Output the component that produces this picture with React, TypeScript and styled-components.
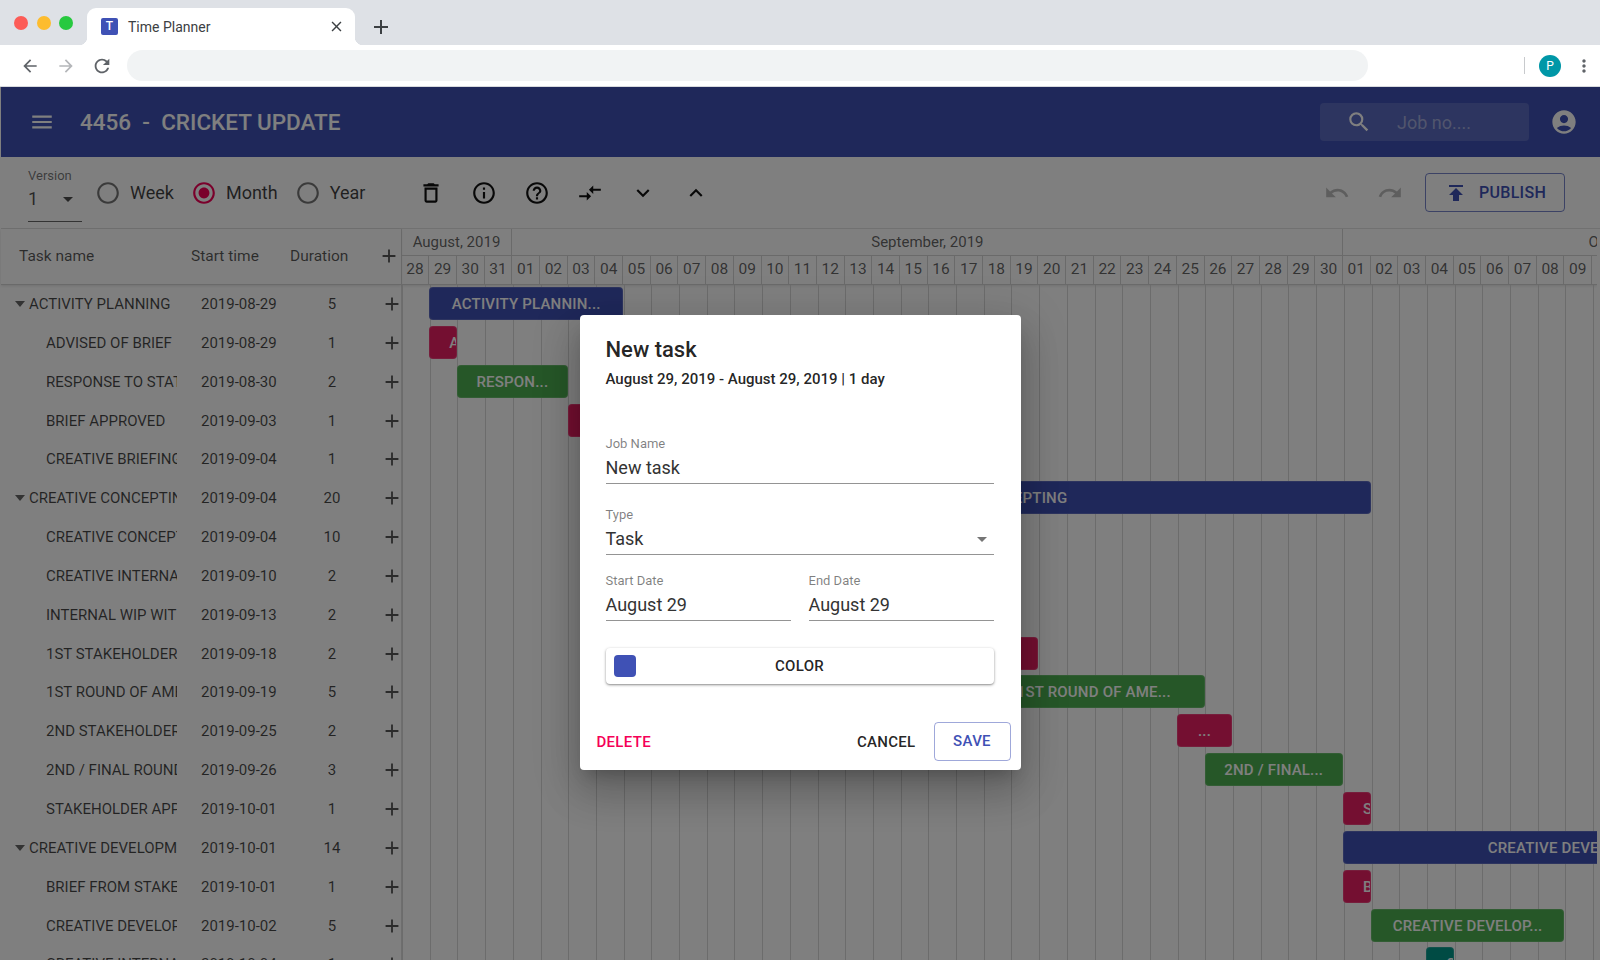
import React from 'react';
import styled, { createGlobalStyle } from 'styled-components';
import {
  MdAccountCircle,
  MdAdd,
  MdArrowBack,
  MdArrowDropDown,
  MdArrowForward,
  MdClose,
  MdCompareArrows,
  MdDeleteOutline,
  MdHelpOutline,
  MdInfoOutline,
  MdKeyboardArrowDown,
  MdKeyboardArrowUp,
  MdMenu,
  MdMoreVert,
  MdPublish,
  MdRadioButtonChecked,
  MdRadioButtonUnchecked,
  MdRedo,
  MdRefresh,
  MdSearch,
  MdUndo,
} from 'react-icons/md';

const DAY = 27.7;
const ROW = 38.85;

const GlobalStyle = createGlobalStyle`
  html, body {
    margin: 0;
    padding: 0;
    background: #fff;
  }
  * {
    box-sizing: border-box;
  }
  body {
    font-family: Roboto, "Liberation Sans", sans-serif;
  }
`;

const Page = styled.div`
  width: 1600px;
  height: 960px;
  display: flex;
  flex-direction: column;
  overflow: hidden;
`;

const TabStrip = styled.div`
  height: 45px;
  flex: none;
  background: #dee1e6;
  display: flex;
  align-items: flex-end;
`;

const Lights = styled.div`
  width: 87px;
  height: 45px;
  padding: 16px 0 0 14px;
  display: flex;
  gap: 8.5px;
`;

const Light = styled.span<{ $color: string }>`
  width: 14px;
  height: 14px;
  border-radius: 50%;
  background: ${(p) => p.$color};
`;

const Tab = styled.div`
  position: relative;
  width: 268px;
  height: 37px;
  background: #fff;
  border-radius: 9px 9px 0 0;
  display: flex;
  align-items: center;
  padding: 0 10px 0 14px;
  color: #3c4043;
  font-size: 14px;

  &::before,
  &::after {
    content: '';
    position: absolute;
    bottom: 0;
    width: 8px;
    height: 8px;
  }
  &::before {
    left: -8px;
    background: radial-gradient(circle at 0 0, transparent 8px, #fff 8.5px);
  }
  &::after {
    right: -8px;
    background: radial-gradient(circle at 100% 0, transparent 8px, #fff 8.5px);
  }
`;

const Favicon = styled.span`
  width: 17px;
  height: 17px;
  margin-right: 10px;
  background: #3f51b5;
  border-radius: 2px;
  color: #fff;
  font-size: 12px;
  font-weight: 500;
  line-height: 17px;
  text-align: center;
`;

const TabTitle = styled.span`
  flex: 1;
`;

const NewTab = styled.span`
  margin-left: 14px;
  height: 37px;
  display: flex;
  align-items: center;
  color: #3c4043;
`;

const AddressBar = styled.div`
  height: 41px;
  flex: none;
  background: #fff;
  display: flex;
  align-items: center;
  padding: 0 6px 0 12px;
  color: #5f6368;
`;

const NavIcon = styled.span<{ $faded?: boolean }>`
  width: 36px;
  display: flex;
  justify-content: center;
  margin-left: ${(p) => (p.$faded ? '0' : '0')};
  color: ${(p) => (p.$faded ? '#b4b6b9' : '#5f6368')};
`;

const UrlField = styled.div`
  width: 1245px;
  height: 31px;
  margin-left: 7px;
  background: #f1f3f4;
  border-radius: 16px;
`;

const BarDivider = styled.span`
  width: 1px;
  height: 17px;
  margin-left: 156px;
  background: #c8cacd;
`;

const Avatar = styled.span`
  width: 22px;
  height: 22px;
  margin-left: 14px;
  border-radius: 50%;
  background: #0097a7;
  color: #fff;
  font-size: 12px;
  line-height: 22px;
  text-align: center;
`;

const MenuDots = styled.span`
  margin-left: 13px;
  display: flex;
  color: #5f6368;
`;

const Stage = styled.div`
  position: relative;
  flex: 1;
  min-height: 0;
  padding-left: 1px;
  background: #fff;
  border-top: 1px solid #d8dade;
  overflow: hidden;
`;

const AppBar = styled.header`
  height: 70px;
  background: #3f51b5;
  display: flex;
  align-items: center;
  padding: 0 22px 0 28px;
  color: #fff;
`;

const JobTitle = styled.h1`
  flex: 1;
  margin: 0 0 0 25px;
  font-size: 22.5px;
  font-weight: 500;
  white-space: pre;
`;

const SearchBox = styled.div`
  width: 209px;
  height: 38px;
  background: rgba(255, 255, 255, 0.15);
  border-radius: 4px;
  display: flex;
  align-items: center;
  padding-left: 26px;
  margin-right: 21px;
`;

const SearchHint = styled.span`
  margin-left: 25px;
  font-size: 18px;
  color: rgba(255, 255, 255, 0.45);
`;

const ToolBar = styled.div`
  height: 71px;
  display: flex;
  align-items: center;
  padding: 0 35px 0 27px;
  color: rgba(0, 0, 0, 0.87);
`;

const VersionField = styled.div`
  width: 54px;
  height: 54px;
  margin-top: 4px;
  border-bottom: 1px solid rgba(0, 0, 0, 0.6);
`;

const SmallLabel = styled.div`
  font-size: 13px;
  line-height: 16px;
  color: rgba(0, 0, 0, 0.54);
`;

const VersionValue = styled.div`
  display: flex;
  align-items: center;
  justify-content: space-between;
  height: 30px;
  font-size: 18px;
  padding-right: 2px;
  color: rgba(0, 0, 0, 0.7);
`;

const RangeGroup = styled.div`
  display: flex;
  align-items: center;
  margin-left: 13px;
  margin-right: 22px;
`;

const RangeOption = styled.label<{ $on?: boolean }>`
  display: flex;
  align-items: center;
  gap: 9px;
  margin-right: 17px;
  font-size: 18px;
  color: rgba(0, 0, 0, 0.75);

  svg {
    color: ${(p) => (p.$on ? '#f50057' : 'rgba(0,0,0,.54)')};
  }
`;

const ToolButton = styled.span`
  width: 53px;
  display: flex;
  justify-content: center;
  color: #111;
`;

const Spacer = styled.div`
  flex: 1;
`;

const HistoryButton = styled.span`
  width: 53px;
  display: flex;
  justify-content: center;
  color: rgba(0, 0, 0, 0.26);
`;

const PublishButton = styled.button`
  width: 140px;
  height: 39px;
  margin-left: 9px;
  border: 1px solid rgba(63, 81, 181, 0.7);
  border-radius: 4px;
  background: transparent;
  color: #3f51b5;
  font: 500 16px Roboto, sans-serif;
  letter-spacing: 0.3px;
  display: flex;
  align-items: center;
  justify-content: center;
  gap: 11px;
`;

const Gantt = styled.div`
  display: grid;
  grid-template-columns: 400.6px 1fr;
  border-top: 1px solid #e2e2e2;
`;

const TaskPanel = styled.div`
  border-right: 1px solid #dcdcdc;
`;

const PanelHead = styled.div`
  height: 55.6px;
  display: grid;
  grid-template-columns: 172px 99px 88px 1fr;
  align-items: center;
  padding-left: 18px;
  font-size: 15.5px;
  color: rgba(0, 0, 0, 0.66);
  border-bottom: 1px solid #d5d5d5;
  box-shadow: 0 1px 3px rgba(0, 0, 0, 0.12);
`;

const PlusCell = styled.span`
  display: flex;
  color: rgba(0, 0, 0, 0.66);
`;

const TaskRow = styled.div`
  height: ${ROW}px;
  display: grid;
  grid-template-columns: 186px 93px 76px 1fr;
  align-items: center;
  padding-left: 14px;
  font-size: 15px;
  color: rgba(0, 0, 0, 0.72);
`;

const TaskName = styled.div<{ $parent?: boolean }>`
  display: flex;
  align-items: center;
  width: 162px;
  padding-left: ${(p) => (p.$parent ? '0' : '31px')};
  overflow: hidden;
  white-space: nowrap;
`;

const Caret = styled.span`
  width: 0;
  height: 0;
  flex: none;
  margin-right: 4px;
  border-left: 5.5px solid transparent;
  border-right: 5.5px solid transparent;
  border-top: 6px solid rgba(0, 0, 0, 0.6);
`;

const Duration = styled.div`
  text-align: center;
  padding-right: 24px;
  margin-left: 24px;
`;

const RowPlus = styled.span`
  display: flex;
  margin-left: 11px;
  color: rgba(0, 0, 0, 0.66);
`;

const Chart = styled.div`
  min-width: 0;
  margin-right: 3px;
  overflow: hidden;
`;

const MonthRow = styled.div`
  height: 27px;
  display: flex;
  white-space: nowrap;
`;

const MonthCell = styled.div<{ $days: number; $lead?: number }>`
  flex: none;
  width: ${(p) => p.$days * DAY}px;
  padding-left: ${(p) => p.$lead ?? 0}px;
  text-align: ${(p) => (p.$lead ? 'left' : 'center')};
  line-height: 27px;
  font-size: 15px;
  color: rgba(0, 0, 0, 0.62);
  border-right: 1px solid #d5d5d5;
  border-bottom: 1px solid #d5d5d5;
`;

const DayRow = styled.div`
  height: 28.6px;
  display: flex;
  border-bottom: 1px solid #d5d5d5;
  box-shadow: 0 1px 3px rgba(0, 0, 0, 0.12);
`;

const DayCell = styled.div`
  flex: none;
  width: ${DAY}px;
  text-align: center;
  line-height: 27px;
  font-size: 15.5px;
  color: rgba(0, 0, 0, 0.62);
  border-right: 1px solid #d5d5d5;
`;

const Timeline = styled.div`
  height: 720px;
  background: repeating-linear-gradient(90deg, #d9d9d9 0, #d9d9d9 1px, transparent 1px, transparent ${DAY}px);
`;

const BarRow = styled.div`
  height: ${ROW}px;
  display: grid;
  grid-template-columns: repeat(70, ${DAY}px);
  align-items: center;
`;

const Bar = styled.div<{ $color: string; $from: number; $days: number; $left?: boolean }>`
  grid-column: ${(p) => p.$from + 1} / span ${p => p.$days};
  height: 33px;
  margin-top: -1px;
  border-radius: 4px;
  background: ${(p) => p.$color};
  border: 1px solid rgba(255, 255, 255, 0.14);
  color: #fff;
  font-size: 15px;
  font-weight: 500;
  line-height: 33px;
  letter-spacing: 0.2px;
  text-align: ${(p) => (p.$left ? 'left' : 'center')};
  padding-left: ${(p) => (p.$left ? '19px' : '0')};
  white-space: nowrap;
  overflow: hidden;
`;

const Backdrop = styled.div`
  position: absolute;
  inset: 0;
  background: rgba(0, 0, 0, 0.5);
  display: flex;
  justify-content: center;
  align-items: flex-start;
  padding-top: 228px;
`;

const Dialog = styled.div`
  width: 441px;
  height: 455px;
  background: #fff;
  border-radius: 4px;
  padding: 20px 10px 9px 26px;
  display: flex;
  flex-direction: column;
  color: rgba(0, 0, 0, 0.87);
  box-shadow: 0 11px 15px -7px rgba(0, 0, 0, 0.2), 0 24px 38px 3px rgba(0, 0, 0, 0.14), 0 9px 46px 8px rgba(0, 0, 0, 0.12);
`;

const DialogTitle = styled.h2`
  margin: 0;
  font-size: 22px;
  line-height: 30px;
  font-weight: 500;
`;

const DialogDates = styled.div`
  margin-top: 4px;
  font-size: 15px;
  line-height: 20px;
  font-weight: 500;
`;

const Form = styled.div`
  margin-top: 47px;
  padding-right: 17px;
  display: flex;
  flex-direction: column;
`;

const Field = styled.div<{ $gap?: number }>`
  flex: 1;
  margin-top: ${(p) => p.$gap ?? 0}px;
  border-bottom: 1px solid rgba(0, 0, 0, 0.42);
`;

const FieldLabel = styled.div`
  font-size: 13px;
  line-height: 16px;
  color: rgba(0, 0, 0, 0.5);
`;

const FieldValue = styled.div`
  display: flex;
  align-items: center;
  justify-content: space-between;
  height: 31px;
  font-size: 18px;
  color: rgba(0, 0, 0, 0.8);
  color: #333;
`;

const FieldPair = styled.div`
  display: flex;
  gap: 18px;
`;

const ColorButton = styled.div`
  position: relative;
  height: 36px;
  margin-top: 27px;
  border-radius: 4px;
  background: #fff;
  font-size: 15px;
  font-weight: 500;
  letter-spacing: 0.3px;
  line-height: 36px;
  text-align: center;
  box-shadow: 0 1px 3px rgba(0, 0, 0, 0.4), 0 1px 1px rgba(0, 0, 0, 0.1);
`;

const Swatch = styled.span`
  position: absolute;
  left: 8px;
  top: 7px;
  width: 22px;
  height: 22px;
  border-radius: 4px;
  background: #3f51b5;
`;

const Actions = styled.div`
  margin-top: auto;
  margin-left: -9px;
  display: flex;
  align-items: center;
  font-size: 15px;
  font-weight: 500;
  letter-spacing: 0.3px;
`;

const DeleteText = styled.span`
  flex: 1;
  color: #f50057;
`;

const CancelText = styled.span`
  margin-right: 18px;
`;

const SaveButton = styled.span`
  width: 77px;
  height: 39px;
  border: 1px solid rgba(63, 81, 181, 0.5);
  border-radius: 4px;
  color: #3f51b5;
  line-height: 37px;
  text-align: center;
`;

const months = [
  { label: 'August, 2019', days: 4 },
  { label: 'September, 2019', days: 30 },
  { label: 'October, 2019', days: 31, lead: 245 },
];

const dayLabels = [28, 29, 30, 31, ...Array.from({ length: 30 }, (_, i) => i + 1), ...Array.from({ length: 9 }, (_, i) => i + 1)].map((d) =>
  String(d).padStart(2, '0'),
);

const BLUE = '#3f51b5';
const PINK = '#e91e63';
const GREEN = '#4caf50';
const TEAL = '#009688';

type Task = {
  name: string;
  start: string;
  days: number;
  parent?: boolean;
  bar?: { color: string; from: number; span: number; text: string; left?: boolean };
};

const tasks: Task[] = [
  { name: 'ACTIVITY PLANNING', start: '2019-08-29', days: 5, parent: true, bar: { color: BLUE, from: 1, span: 7, text: 'ACTIVITY PLANNIN...' } },
  { name: 'ADVISED OF BRIEF', start: '2019-08-29', days: 1, bar: { color: PINK, from: 1, span: 1, text: 'A', left: true } },
  { name: 'RESPONSE TO STATUS', start: '2019-08-30', days: 2, bar: { color: GREEN, from: 2, span: 4, text: 'RESPON...' } },
  { name: 'BRIEF APPROVED', start: '2019-09-03', days: 1, bar: { color: PINK, from: 6, span: 1, text: 'B', left: true } },
  { name: 'CREATIVE BRIEFING', start: '2019-09-04', days: 1 },
  { name: 'CREATIVE CONCEPTING', start: '2019-09-04', days: 20, parent: true, bar: { color: BLUE, from: 7, span: 28, text: 'CREATIVE CONCEPTING' } },
  { name: 'CREATIVE CONCEPTS', start: '2019-09-04', days: 10 },
  { name: 'CREATIVE INTERNAL', start: '2019-09-10', days: 2 },
  { name: 'INTERNAL WIP WITH', start: '2019-09-13', days: 2 },
  { name: '1ST STAKEHOLDER', start: '2019-09-18', days: 2, bar: { color: PINK, from: 21, span: 2, text: '' } },
  { name: '1ST ROUND OF AMENDS', start: '2019-09-19', days: 5, bar: { color: GREEN, from: 21, span: 8, text: '1ST ROUND OF AME...' } },
  { name: '2ND STAKEHOLDER', start: '2019-09-25', days: 2, bar: { color: PINK, from: 28, span: 2, text: '...' } },
  { name: '2ND / FINAL ROUND', start: '2019-09-26', days: 3, bar: { color: GREEN, from: 29, span: 5, text: '2ND / FINAL...' } },
  { name: 'STAKEHOLDER APPROVAL', start: '2019-10-01', days: 1, bar: { color: PINK, from: 34, span: 1, text: 'S', left: true } },
  { name: 'CREATIVE DEVELOPMENT', start: '2019-10-01', days: 14, parent: true, bar: { color: BLUE, from: 34, span: 17, text: 'CREATIVE DEVELOPMENT' } },
  { name: 'BRIEF FROM STAKEHOLDER', start: '2019-10-01', days: 1, bar: { color: PINK, from: 34, span: 1, text: 'B', left: true } },
  { name: 'CREATIVE DEVELOPMENT', start: '2019-10-02', days: 5, bar: { color: GREEN, from: 35, span: 7, text: 'CREATIVE DEVELOP...' } },
  { name: 'CREATIVE INTERNAL', start: '2019-10-04', days: 1, bar: { color: TEAL, from: 37, span: 1, text: 'C', left: true } },
];

const ToolIcons = [MdDeleteOutline, MdInfoOutline, MdHelpOutline, MdCompareArrows, MdKeyboardArrowDown, MdKeyboardArrowUp];

const App: React.FC = () => {
  return (
    <Page>
      <GlobalStyle />
      <TabStrip>
        <Lights>
          <Light $color="#fc5c57" />
          <Light $color="#fdbc2e" />
          <Light $color="#27c93f" />
        </Lights>
        <Tab>
          <Favicon>T</Favicon>
          <TabTitle>Time Planner</TabTitle>
          <MdClose size={17} />
        </Tab>
        <NewTab>
          <MdAdd size={24} />
        </NewTab>
      </TabStrip>

      <AddressBar>
        <NavIcon>
          <MdArrowBack size={20} />
        </NavIcon>
        <NavIcon $faded>
          <MdArrowForward size={20} />
        </NavIcon>
        <NavIcon>
          <MdRefresh size={22} />
        </NavIcon>
        <UrlField />
        <BarDivider />
        <Avatar>P</Avatar>
        <MenuDots>
          <MdMoreVert size={20} />
        </MenuDots>
      </AddressBar>

      <Stage>
        <AppBar>
          <MdMenu size={26} />
          <JobTitle>{'4456  -  CRICKET UPDATE'}</JobTitle>
          <SearchBox>
            <MdSearch size={26} />
            <SearchHint>Job no....</SearchHint>
          </SearchBox>
          <MdAccountCircle size={28} />
        </AppBar>

        <ToolBar>
          <VersionField>
            <SmallLabel>Version</SmallLabel>
            <VersionValue>
              1
              <MdArrowDropDown size={24} />
            </VersionValue>
          </VersionField>
          <RangeGroup>
            <RangeOption>
              <MdRadioButtonUnchecked size={26} />
              Week
            </RangeOption>
            <RangeOption $on>
              <MdRadioButtonChecked size={26} />
              Month
            </RangeOption>
            <RangeOption>
              <MdRadioButtonUnchecked size={26} />
              Year
            </RangeOption>
          </RangeGroup>
          {ToolIcons.map((Icon, i) => (
            <ToolButton key={i}>
              <Icon size={26} />
            </ToolButton>
          ))}
          <Spacer />
          <HistoryButton>
            <MdUndo size={26} />
          </HistoryButton>
          <HistoryButton>
            <MdRedo size={26} />
          </HistoryButton>
          <PublishButton>
            <MdPublish size={24} />
            PUBLISH
          </PublishButton>
        </ToolBar>

        <Gantt>
          <TaskPanel>
            <PanelHead>
              <span>Task name</span>
              <span>Start time</span>
              <span>Duration</span>
              <PlusCell>
                <MdAdd size={22} />
              </PlusCell>
            </PanelHead>
            {tasks.map((task, i) => (
              <TaskRow key={i}>
                <TaskName $parent={task.parent}>
                  {task.parent && <Caret />}
                  {task.name}
                </TaskName>
                <span>{task.start}</span>
                <Duration>{task.days}</Duration>
                <RowPlus>
                  <MdAdd size={22} />
                </RowPlus>
              </TaskRow>
            ))}
          </TaskPanel>

          <Chart>
            <MonthRow>
              {months.map((m) => (
                <MonthCell key={m.label} $days={m.days} $lead={m.lead}>
                  {m.label}
                </MonthCell>
              ))}
            </MonthRow>
            <DayRow>
              {dayLabels.map((d, i) => (
                <DayCell key={i}>{d}</DayCell>
              ))}
            </DayRow>
            <Timeline>
              {tasks.map((task, i) => (
                <BarRow key={i}>
                  {task.bar && (
                    <Bar $color={task.bar.color} $from={task.bar.from} $days={task.bar.span} $left={task.bar.left}>
                      {task.bar.text}
                    </Bar>
                  )}
                </BarRow>
              ))}
            </Timeline>
          </Chart>
        </Gantt>

        <Backdrop>
          <Dialog>
            <DialogTitle>New task</DialogTitle>
            <DialogDates>August 29, 2019 - August 29, 2019 | 1 day</DialogDates>
            <Form>
              <Field>
                <FieldLabel>Job Name</FieldLabel>
                <FieldValue>New task</FieldValue>
              </Field>
              <Field $gap={23}>
                <FieldLabel>Type</FieldLabel>
                <FieldValue>
                  Task
                  <MdArrowDropDown size={24} color="#757575" />
                </FieldValue>
              </Field>
              <FieldPair>
                <Field $gap={18}>
                  <FieldLabel>Start Date</FieldLabel>
                  <FieldValue>August 29</FieldValue>
                </Field>
                <Field $gap={18}>
                  <FieldLabel>End Date</FieldLabel>
                  <FieldValue>August 29</FieldValue>
                </Field>
              </FieldPair>
              <ColorButton>
                <Swatch />
                COLOR
              </ColorButton>
            </Form>
            <Actions>
              <DeleteText>DELETE</DeleteText>
              <CancelText>CANCEL</CancelText>
              <SaveButton>SAVE</SaveButton>
            </Actions>
          </Dialog>
        </Backdrop>
      </Stage>
    </Page>
  );
};

export default App;
